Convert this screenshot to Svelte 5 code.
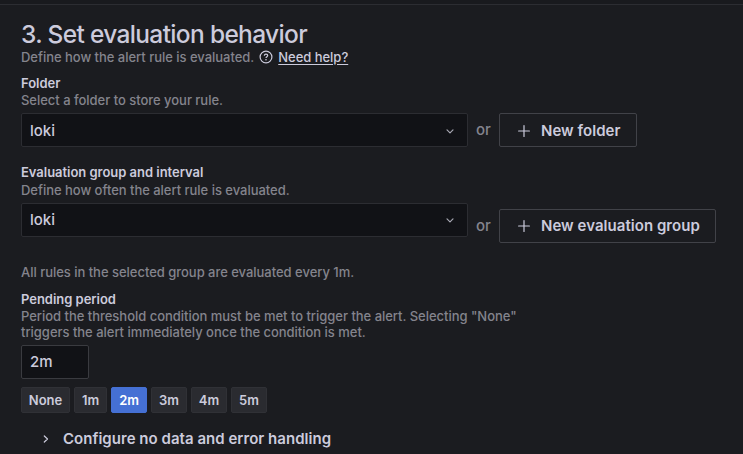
<script>
  const periods = ['None', '1m', '2m', '3m', '4m', '5m'];
  let selected = $state('2m');
</script>

{#snippet chevron()}
  <svg class="chevron" width="8" height="6" viewBox="0 0 8 6"><path d="M1 1.9 4 4.9 7 1.9" /></svg>
{/snippet}

{#snippet plus()}
  <svg class="plus" width="12" height="12" viewBox="0 0 12 12"><path d="M6 .6V11.4M.6 6H11.4" /></svg>
{/snippet}

<main>
  <h2>3. Set evaluation behavior</h2>
  <div class="intro">
    <span>Define how the alert rule is evaluated.</span>
    <svg class="help" width="14" height="14" viewBox="0 0 14 14">
      <circle cx="7" cy="7" r="5.9" />
      <path d="M5.3 5.7C5.4 4.6 6.1 4.1 7 4.1c1 0 1.7.6 1.7 1.5C8.7 6.7 7.1 6.8 7 8" />
      <circle class="dot" cx="7" cy="9.8" r=".8" />
    </svg>
    <a href="#help">Need help?</a>
  </div>

  <section class="folder">
    <div class="label">Folder</div>
    <p>Select a folder to store your rule.</p>
    <div class="row">
      <div class="select"><span>loki</span>{@render chevron()}</div>
      <span class="or">or</span>
      <button class="outline">{@render plus()}<span>New folder</span></button>
    </div>
  </section>

  <section class="group">
    <div class="label">Evaluation group and interval</div>
    <p>Define how often the alert rule is evaluated.</p>
    <div class="row">
      <div class="select"><span>loki</span>{@render chevron()}</div>
      <div class="lowered">
        <span class="or">or</span>
        <button class="outline wide">{@render plus()}<span>New evaluation group</span></button>
      </div>
    </div>
  </section>

  <p class="note">All rules in the selected group are evaluated every 1m.</p>

  <section class="pending">
    <div class="label">Pending period</div>
    <p>Period the threshold condition must be met to trigger the alert. Selecting "None"<br />triggers the alert immediately once the condition is met.</p>
    <div class="input">{selected}</div>
    <div class="chips">
      {#each periods as p}
        <button class="chip" class:first={p === 'None'} class:short={p === '1m'} class:active={p === selected} onclick={() => (selected = p)}>{p}</button>
      {/each}
    </div>
  </section>

  <div class="collapse">
    <svg class="right" width="6" height="8" viewBox="0 0 6 8"><path d="M1.3 1 4.5 4 1.3 7" /></svg>
    <span>Configure no data and error handling</span>
  </div>
</main>

<style>
  :global(body) { background: #1b1c20; }
  main {
    box-sizing: border-box;
    height: 454px;
    padding: 17px 0 0 21px;
    border-top: 4px solid #191a1e;
    box-shadow: inset 0 1px #2c2d32;
    background: #1b1c20;
    color: #cccbdc;
    font: 600 13px/16px Inter, "Liberation Sans", sans-serif;
    letter-spacing: -.03px;
    overflow: hidden;
    white-space: nowrap;
  }
  h2 { margin: 0; font-size: 24.5px; font-weight: 450; line-height: 26px; letter-spacing: -.66px; }
  p { margin: 0; }
  p, .intro, .or { color: #84848d; font-weight: 450; letter-spacing: -.025px; }
  .intro { display: flex; align-items: center; height: 18px; margin-top: 1px; }
  .help { margin: 0 5px; fill: none; stroke: #cccbdc; stroke-width: 1.2; }
  .help .dot { fill: #cccbdc; stroke: none; }
  a { color: #cccbdc; text-underline-offset: 2px; }
  .label { height: 18px; line-height: 18px; }
  .folder { margin-top: 8px; }
  .folder p { position: relative; }
  .folder .row { margin-top: 5px; }
  .group { margin-top: 16px; }
  .group p { margin-top: 1px; }
  .group .row { margin-top: 5px; }
  .row { display: flex; align-items: flex-start; height: 34px; }
  .select, .input {
    box-sizing: border-box;
    display: flex;
    align-items: center;
    height: 34px;
    border: 1px solid #2c2d32;
    border-radius: 2px;
    background: #111216;
    font-size: 15px;
    font-weight: 450;
    letter-spacing: 0;
  }
  .select { width: 447px; justify-content: space-between; padding: 0 13px 0 8px; }
  .folder .select, .folder .outline { padding-top: 1px; }
  .chevron, .plus, .right { fill: none; stroke: #a7a7b2; stroke-width: 1.2; stroke-linecap: round; stroke-linejoin: round; }
  .plus, .right { stroke: #cccbdc; }
  .or { width: 31px; padding-left: 8px; box-sizing: border-box; font-size: 15px; line-height: 34px; }
  .lowered { display: flex; margin-top: 6px; }
  button { box-sizing: border-box; font: inherit; color: inherit; letter-spacing: inherit; }
  .outline {
    display: flex;
    align-items: center;
    gap: 11px;
    width: 138px;
    height: 34px;
    padding: 0 0 0 18px;
    border: 1px solid #414248;
    border-radius: 2px;
    background: none;
    font-size: 15px;
    letter-spacing: .04px;
  }
  .wide { width: 217px; }
  .note { margin-top: 27px; }
  .pending { margin-top: 10px; }
  .input { width: 68px; margin-top: 5px; padding-left: 8px; border-color: #3a3b40; }
  .chips { display: flex; gap: 4px; margin-top: 8px; }
  .chip { width: 36px; height: 26px; padding: 0; border: 1px solid #303136; border-radius: 2px; background: #2a2b30; }
  .first { width: 49px; }
  .short { width: 33px; }
  .chip.active { color: #fff; background: #4570d4; border-color: #4570d4; }
  .collapse { display: flex; align-items: center; gap: 14px; margin-top: 16px; padding-left: 22px; height: 20px; font-size: 15px; letter-spacing: .03px; }
</style>
